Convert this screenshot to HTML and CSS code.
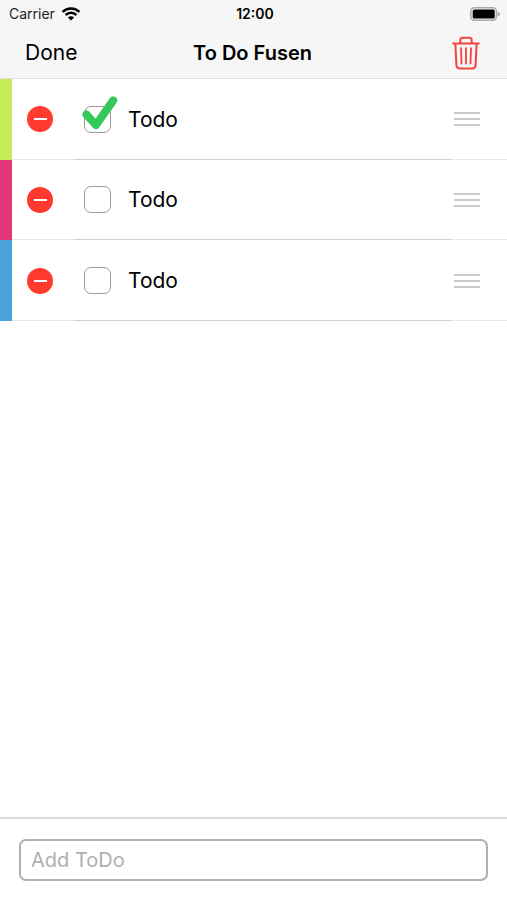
FILE: index.html
```html
<!DOCTYPE html>
<html lang="en">
<head>
<meta charset="utf-8">
<meta name="viewport" content="width=device-width, initial-scale=1">
<title>To Do Fusen</title>
<link rel="stylesheet" href="styles.css">
</head>
<body>
<header class="top">
  <div class="status">
    <span class="carrier">Carrier
      <svg class="wifi" width="20" height="14" viewBox="0 0 20 14" aria-hidden="true">
        <path d="M1.6 4.9A12 12 0 0 1 18.4 4.9M4.6 8A7.8 7.8 0 0 1 15.4 8" fill="none" stroke="#000" stroke-width="2.5"/>
        <path d="M10 13.6 6.9 10.5A4.4 4.4 0 0 1 13.1 10.5Z" fill="#000"/>
      </svg>
    </span>
    <time class="clock">12:00</time>
    <svg class="battery" width="32" height="16" viewBox="0 0 32 16" aria-label="Battery full">
      <rect x="1.8" y="1.8" width="25.6" height="12.4" rx="3.6" fill="#f6f6f6" stroke="#aaa" stroke-width="1.5"/>
      <rect x="3.7" y="3.4" width="22" height="9.2" rx="1.6" fill="#000"/>
      <path d="M28.6 5.4Q31 6.4 31 8T28.6 10.6Z" fill="#aaa"/>
    </svg>
  </div>
  <nav class="bar">
    <button class="done" type="button">Done</button>
    <h1 class="title">To Do Fusen</h1>
    <button class="trash" type="button" aria-label="Delete all">
      <svg width="28" height="34" viewBox="0 0 28 34" fill="none" stroke="#f0443c" stroke-width="2" stroke-linecap="round" stroke-linejoin="round">
        <path d="M1.2 7.5H26.8M8.3 7V4.2Q8.3 1.8 10.7 1.8H17.3Q19.7 1.8 19.7 4.2V7M3.4 8 4.4 29.2Q4.6 32.4 7.8 32.4H20.2Q23.4 32.4 23.6 29.2L24.6 8"/>
        <path d="M9 12.2 9.5 27.6M14 12.2V27.6M19 12.2 18.5 27.6" stroke-width="1.8"/>
      </svg>
    </button>
  </nav>
</header>

<main class="content">
  <ul class="list">
    <li class="row lime">
      <button class="remove" type="button" aria-label="Remove"></button>
      <label class="item">
        <span class="check">
          <input class="box" type="checkbox" checked>
          <svg class="tick" width="38" height="38" viewBox="0 0 38 38" aria-hidden="true"><path d="M6.4 19.5 16 30 33.2 5.4" fill="none" stroke="#34c759" stroke-width="8" stroke-linecap="round" stroke-linejoin="round"/></svg>
        </span>
        <span>Todo</span>
      </label>
      <button class="grip" type="button" aria-label="Reorder"></button>
    </li>
    <li class="row pink">
      <button class="remove" type="button" aria-label="Remove"></button>
      <label class="item">
        <span class="check">
          <input class="box" type="checkbox">
          <svg class="tick" width="38" height="38" viewBox="0 0 38 38" aria-hidden="true"><path d="M6.4 19.5 16 30 33.2 5.4" fill="none" stroke="#34c759" stroke-width="8" stroke-linecap="round" stroke-linejoin="round"/></svg>
        </span>
        <span>Todo</span>
      </label>
      <button class="grip" type="button" aria-label="Reorder"></button>
    </li>
    <li class="row blue">
      <button class="remove" type="button" aria-label="Remove"></button>
      <label class="item">
        <span class="check">
          <input class="box" type="checkbox">
          <svg class="tick" width="38" height="38" viewBox="0 0 38 38" aria-hidden="true"><path d="M6.4 19.5 16 30 33.2 5.4" fill="none" stroke="#34c759" stroke-width="8" stroke-linecap="round" stroke-linejoin="round"/></svg>
        </span>
        <span>Todo</span>
      </label>
      <button class="grip" type="button" aria-label="Reorder"></button>
    </li>
  </ul>
</main>

<footer class="add">
  <input class="field" type="text" placeholder="Add ToDo" aria-label="Add ToDo">
</footer>
</body>
</html>
```
FILE: styles.css
```css
* {
  box-sizing: border-box;
}

body {
  margin: 0;
  min-height: 100vh;
  display: flex;
  flex-direction: column;
  background: #fff;
  color: #000;
  font-family: Inter, "Liberation Sans", sans-serif;
  font-size: 21px;
}

button {
  margin: 0;
  padding: 0;
  border: 0;
  background: none;
  color: inherit;
  font: inherit;
}

.top {
  background: #f6f6f6;
  border-bottom: 1px solid #e2e2e2;
}

.status,
.bar {
  display: grid;
  grid-template-columns: 1fr auto 1fr;
  align-items: center;
}

.status {
  height: 27px;
  padding: 0 6px 0 9px;
  font-size: 14px;
}

.carrier {
  display: flex;
  align-items: center;
  gap: 6px;
  color: #222;
}

.clock {
  font-weight: 600;
}

.battery,
.trash {
  justify-self: end;
}

.bar {
  height: 51px;
  padding: 0 27px 0 25px;
}

.done {
  justify-self: start;
}

.title {
  margin: 0;
  font-size: 20px;
  font-weight: 600;
}

.trash svg {
  display: block;
}

.content {
  flex: 1;
}

.list {
  display: grid;
  grid-template-rows: repeat(3, 1fr);
  height: 242px;
  margin: 0;
  padding: 0;
  list-style: none;
}

.row {
  display: flex;
  align-items: center;
  padding: 0 27px 0 15px;
  border-left: 12px solid;
  background: linear-gradient(90deg, #e6e6e6 62px, #cfcfcf 62px calc(100% - 56px), #e6e6e6 0) bottom / 100% 1px no-repeat;
}

.lime {
  border-color: #c5ec57;
}

.pink {
  border-color: #e5367c;
}

.blue {
  border-color: #4ba3dc;
}

.remove {
  display: grid;
  place-items: center;
  width: 26px;
  height: 26px;
  border-radius: 50%;
  background: #ff3b30;
}

.remove::before {
  content: "";
  width: 13px;
  height: 2px;
  background: #fff;
}

.item {
  display: flex;
  flex: 1;
  align-items: center;
  gap: 17px;
  margin-left: 31px;
}

.check {
  position: relative;
  display: flex;
}

.box {
  appearance: none;
  width: 27px;
  height: 27px;
  margin: 0;
  border: 1px solid #999;
  border-radius: 7px;
  background: #fff;
}

.tick {
  position: absolute;
  left: -4px;
  top: -11px;
  display: none;
}

.box:checked + .tick {
  display: block;
}

.grip {
  width: 26px;
  height: 14px;
  background: repeating-linear-gradient(#cacaca 0 2px, transparent 2px 6px);
}

.add {
  padding: 20px 19px 19px;
  border-top: 2px solid #dadada;
}

.field {
  display: block;
  width: 100%;
  height: 42px;
  padding: 0 10px;
  border: 2px solid #b0b0b0;
  border-radius: 7px;
  background: #fff;
  color: inherit;
  font: inherit;
  font-size: 20px;
}

.field::placeholder {
  color: #b0b0b0;
  opacity: 1;
}
```
